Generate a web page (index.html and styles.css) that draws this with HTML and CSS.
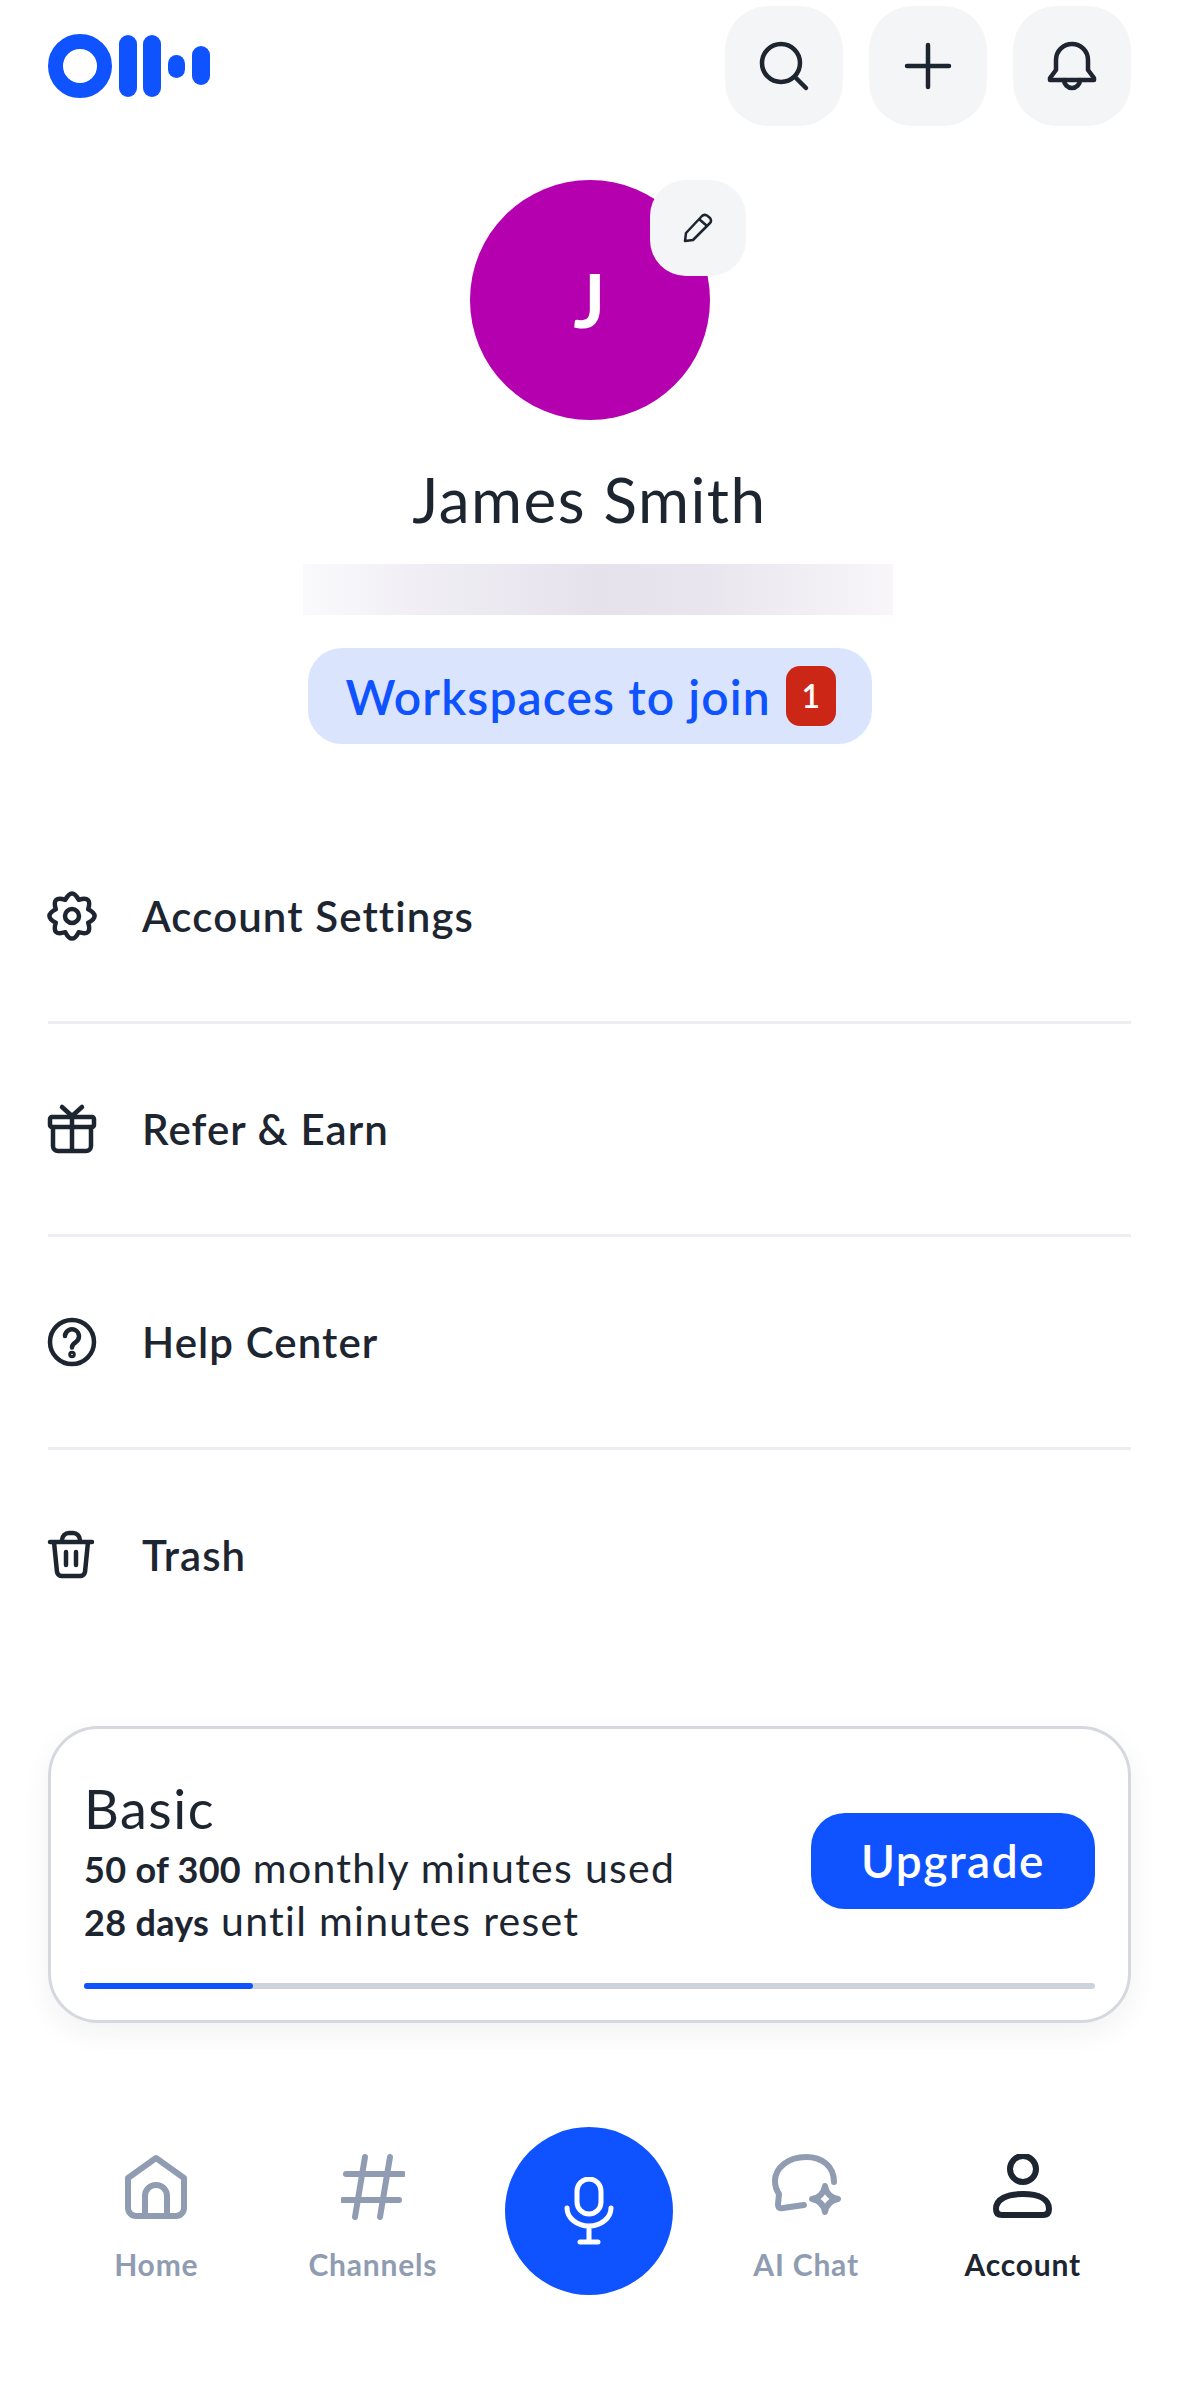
FILE: index.html
```html
<!DOCTYPE html>
<html lang="en">
<head>
    <meta charset="UTF-8">
    <meta name="viewport" content="width=device-width, initial-scale=1.0">
    <title>Account</title>
    <link rel="stylesheet" href="styles.css">
</head>
<body>

<div class="page">
    <header class="topbar">
        <svg class="logo" viewBox="0 0 162 64">
            <circle cx="32" cy="32" r="24.5" fill="none" stroke="#0f52ff" stroke-width="15"/>
            <rect x="71" y="1" width="18" height="62" rx="9" fill="#0f52ff"/>
            <rect x="95" y="1" width="18" height="62" rx="9" fill="#0f52ff"/>
            <rect x="120" y="21" width="17" height="23" rx="8.5" fill="#0f52ff"/>
            <rect x="144" y="12" width="18" height="39" rx="9" fill="#0f52ff"/>
        </svg>
        <div class="top-actions">
            <button class="round-btn">
                <svg class="icon" viewBox="0 0 48 48"><circle cx="21" cy="21" r="19"/><path d="M35 35l11 11"/></svg>
            </button>
            <button class="round-btn">
                <svg class="icon" viewBox="0 0 48 48"><path d="M24 3v42M3 24h42"/></svg>
            </button>
            <button class="round-btn">
                <svg class="icon" viewBox="0 0 48 48"><path d="M8 28V18a16 16 0 0 1 32 0v10l6 8v2H2v-2z"/><path d="M16 38a8 8 0 0 0 16 0"/></svg>
            </button>
        </div>
    </header>

    <section class="profile">
        <div class="avatar">
            J
            <button class="edit-btn">
                <svg class="pencil" viewBox="0 0 30 30"><path d="M2 28l1-8L19 3q2-2 5-.5L27 5q2 3 0 5L10 27z"/><path d="M16 6l8 7"/></svg>
            </button>
        </div>
        <div class="name">James Smith</div>
        <div class="email-blur"></div>
        <div class="join-pill">
            <span>Workspaces to join</span>
            <span class="badge">1</span>
        </div>
    </section>

    <ul class="menu">
        <li class="menu-row">
            <svg class="icon" viewBox="0 0 48 48"><path d="M17.3 7.83Q24-5 30.7 7.83 44.500 3.500 40.170 17.300 53 24 40.170 30.700 44.500 44.500 30.700 40.170 24 53 17.300 40.170 3.500 44.500 7.830 30.700-5 24 7.830 17.300 3.500 3.500 17.300 7.830z"/><circle cx="24" cy="24" r="7"/></svg>
            <span class="menu-label">Account Settings</span>
        </li>
        <li class="menu-row">
            <svg class="icon" viewBox="0 0 48 48"><rect x="2" y="12" width="44" height="10" rx="2"/><path d="M5 22v19a5 5 0 0 0 5 5h28a5 5 0 0 0 5-5V22M24 12v34M24 11L14 2M24 11L34 2"/></svg>
            <span class="menu-label">Refer &amp; Earn</span>
        </li>
        <li class="menu-row">
            <svg class="icon" viewBox="0 0 48 48"><circle cx="24" cy="24" r="22"/><path d="M17 18a7 7 0 1 1 11 6c-2.500 1.600-4 3-4 5.500"/><circle cx="24" cy="36.500" r="1.500"/></svg>
            <span class="menu-label">Help Center</span>
        </li>
        <li class="menu-row">
            <svg class="icon" viewBox="0 0 48 48"><path d="M2 11h42M14 11V9a7 7 0 0 1 7-7h4a7 7 0 0 1 7 7v2M6 11l3 30a5 5 0 0 0 5 4h18a5 5 0 0 0 5-4l3-30M18 21v13M28 21v13"/></svg>
            <span class="menu-label">Trash</span>
        </li>
    </ul>

    <section class="plan-card">
        <div class="plan-top">
            <div>
                <div class="plan-name">Basic</div>
                <div class="plan-line"><b>50 of 300</b> monthly minutes used</div>
                <div class="plan-line"><b>28 days</b> until minutes reset</div>
            </div>
            <button class="upgrade">Upgrade</button>
        </div>
        <div class="progress"><div class="progress-fill" style="width: 16.67%"></div></div>
    </section>

    <nav class="tabbar">
        <div class="tab">
            <svg class="tab-icon" viewBox="0 0 64 66"><path d="M32 4l28 20v30a8 8 0 0 1-8 8H12a8 8 0 0 1-8-8V24z"/><path d="M21 62V42a11 11 0 0 1 22 0v20"/></svg>
            <span>Home</span>
        </div>
        <div class="tab">
            <svg class="tab-icon" viewBox="0 0 64 66"><path d="M24 3L14 63M49 3L39 63M5 20h57M2 46h56"/></svg>
            <span>Channels</span>
        </div>
        <div class="tab-mic">
            <button class="mic-btn">
                <svg class="mic" viewBox="0 0 50 68"><rect x="13" y="2" width="24" height="35" rx="12"/><path d="M3 31c0 10 10 18 22 18s22-8 22-18M25 49v16M16 65h18"/></svg>
            </button>
        </div>
        <div class="tab">
            <svg class="tab-icon" viewBox="0 0 69 66"><path d="M62 28C62 12 50 3 34 3 16 3 3 14 3 27c0 6 2 10 4 13l-1 10c0 4 2 5 5 4l21-3"/><path d="M53 32q2 11 13 13-11 2-13 13-2-11-13-13 11-2 13-13z"/></svg>
            <span>AI Chat</span>
        </div>
        <div class="tab active">
            <svg class="tab-icon" viewBox="0 0 59 66"><circle cx="30" cy="15" r="13"/><path d="M3 55c0-10 11-15 27-15s26 5 26 15c0 4-2 6-6 6H9c-4 0-6-2-6-6z"/></svg>
            <span>Account</span>
        </div>
    </nav>
</div>

</body>
</html>
```
FILE: styles.css
```css
body, html {
    margin: 0;
    padding: 0;
    height: 100%;
    overflow: hidden;
    background: #fff;
}
.page {
    font-family: "Lato", "Open Sans", sans-serif;
    color: #1d2530;
    height: 2396px;
}
button {
    border: 0;
    padding: 0;
    font-family: inherit;
}
.icon {
    width: 48px;
    height: 48px;
    fill: none;
    stroke: #1d2530;
    stroke-width: 4.500;
    stroke-linecap: round;
    stroke-linejoin: round;
    overflow: visible;
    flex: none;
}

.topbar {
    display: flex;
    justify-content: space-between;
    align-items: center;
    padding: 6px 48px 0;
}
.logo {
    width: 162px;
    height: 64px;
}
.top-actions {
    display: flex;
    gap: 26px;
}
.round-btn {
    width: 118px;
    height: 120px;
    border-radius: 44px;
    background: #f4f5f7;
    display: flex;
    justify-content: center;
    align-items: center;
}

.profile {
    display: flex;
    flex-direction: column;
    align-items: center;
    margin-top: 54px;
}
.avatar {
    position: relative;
    width: 240px;
    height: 240px;
    border-radius: 50%;
    background: #b500b0;
    color: #fff;
    font-size: 74px;
    font-weight: 700;
    line-height: 240px;
    text-align: center;
}
.edit-btn {
    position: absolute;
    top: 0;
    right: -36px;
    width: 96px;
    height: 96px;
    border-radius: 36px;
    background: #f4f5f7;
    display: flex;
    justify-content: center;
    align-items: center;
}
.pencil {
    width: 30px;
    height: 30px;
    fill: none;
    stroke: #1d2530;
    stroke-width: 2.500;
    stroke-linejoin: round;
}
.name {
    margin-top: 44px;
    font-size: 62px;
    line-height: 70px;
    letter-spacing: 1.500px;
}
.email-blur {
    width: 590px;
    height: 51px;
    margin-top: 30px;
    margin-left: 16px;
    background: linear-gradient(90deg, #fafafc 0%, #f1eff5 18%, #e5e2ec 50%, #e8e5ee 68%, #f8f6f9 100%);
}
.join-pill {
    display: flex;
    align-items: center;
    gap: 15px;
    width: 564px;
    height: 96px;
    box-sizing: border-box;
    margin-top: 33px;
    padding-left: 38px;
    border-radius: 34px;
    background: #dbe4fd;
    color: #0f52ff;
    font-size: 48px;
    font-weight: 600;
    letter-spacing: 1.100px;
}
.badge {
    width: 50px;
    height: 60px;
    border-radius: 14px;
    background: #cc2617;
    color: #fff;
    font-size: 32px;
    line-height: 60px;
    letter-spacing: 0;
    text-align: center;
}

.menu {
    list-style: none;
    margin: 67px 48px 0;
    padding: 0;
}
.menu-row {
    display: flex;
    align-items: center;
    gap: 46px;
    height: 210px;
    border-bottom: 3px solid #eceef1;
    font-size: 42px;
    font-weight: 600;
    letter-spacing: 1.100px;
}
.menu-row:last-child {
    border-bottom: 0;
}

.plan-card {
    box-sizing: border-box;
    height: 297px;
    margin: 66px 48px 0;
    padding: 50px 33px 0;
    border: 3px solid #d5d8de;
    border-radius: 50px;
    background: #fff;
    box-shadow: 0 10px 30px rgba(30, 40, 60, 0.06);
}
.plan-top {
    display: flex;
    justify-content: space-between;
    align-items: center;
}
.plan-name {
    font-size: 54px;
    line-height: 60px;
    margin-bottom: 3px;
    letter-spacing: 1.500px;
}
.plan-line {
    font-size: 41px;
    line-height: 52px;
    letter-spacing: 1.300px;
}
.plan-line b {
    font-size: 36px;
    font-weight: 700;
    letter-spacing: 0.300px;
}
.upgrade {
    width: 284px;
    height: 96px;
    margin-bottom: 6px;
    border-radius: 34px;
    background: #0f52ff;
    color: #fff;
    font-size: 46px;
    font-weight: 600;
    letter-spacing: 1.500px;
}
.progress {
    height: 6px;
    margin-top: 35px;
    border-radius: 3px;
    background: #cdd2dc;
}
.progress-fill {
    height: 100%;
    border-radius: 3px;
    background: #0f52ff;
}

.tabbar {
    display: grid;
    grid-template-columns: repeat(5, 1fr);
    height: 168px;
    margin-top: 104px;
    padding: 0 48px;
}
.tab {
    display: flex;
    flex-direction: column;
    align-items: center;
    padding-top: 27px;
    color: #8f9cb2;
    font-size: 30px;
    font-weight: 700;
    line-height: 36px;
    letter-spacing: 0.800px;
}
.tab span {
    margin-top: 26px;
}
.tab.active {
    color: #1d2530;
}
.tab-icon {
    height: 66px;
    fill: none;
    stroke: #8f9cb2;
    stroke-width: 6;
    stroke-linecap: round;
    stroke-linejoin: round;
}
.tab.active .tab-icon {
    stroke: #1d2530;
}
.tab-mic {
    display: flex;
    justify-content: center;
}
.mic-btn {
    width: 168px;
    height: 168px;
    border-radius: 50%;
    background: #0f52ff;
    display: flex;
    justify-content: center;
    align-items: center;
}
.mic {
    width: 50px;
    height: 68px;
    fill: none;
    stroke: #fff;
    stroke-width: 5;
    stroke-linecap: round;
    stroke-linejoin: round;
}
```
